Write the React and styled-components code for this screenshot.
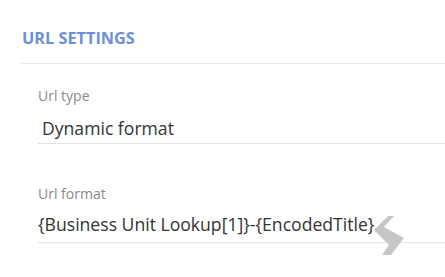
import React from "react";
import styled, { createGlobalStyle } from "styled-components";

const GlobalStyle = createGlobalStyle`
  html, body {
    height: 100%;
  }
  body {
    margin: 0;
    background: #fff;
    font-family: "Open Sans", "Noto Sans", sans-serif;
  }
  #root {
    min-height: 100%;
  }
`;

const Section = styled.section`
  padding: 27px 0 0 21px;
  width: 445px;
  box-sizing: border-box;
`;

const Heading = styled.h2`
  margin: 0;
  padding: 0 0 14px 1px;
  font-size: 16.3px;
  line-height: 22px;
  font-weight: 700;
  color: #6b8fda;
  border-bottom: 1px solid #e8e8e8;
`;

const Fields = styled.div`
  display: flex;
  flex-direction: column;
  gap: 40px;
  padding: 22px 0 0 17px;
`;

const Field = styled.div`
  display: flex;
  flex-direction: column;
  gap: ${({ $gap }) => $gap}px;
`;

const Label = styled.label`
  font-size: 14px;
  line-height: 20px;
  color: #8a8a8a;
`;

const Value = styled.div`
  font-size: 17.6px;
  line-height: 24px;
  color: #333;
  padding: 0 0 ${({ $bottom }) => $bottom}px ${({ $indent }) => $indent}px;
  border-bottom: 1px solid #e3e3e3;
  white-space: nowrap;
`;

const Text = styled.span`
  position: relative;
`;

const Handle = styled.svg`
  position: absolute;
  left: calc(100% - 5px);
  top: 0;
  z-index: 1;
`;

function DragHandle() {
  return (
    <Handle width="40" height="46" viewBox="0 0 40 46">
      <polygon
        points="19,4 25,4 15,15 35,26 22,43 13,43 20,33 5,18"
        fill="#c6c6c6"
      />
    </Handle>
  );
}

export default function App() {
  return (
    <>
      <GlobalStyle />
      <Section>
        <Heading>URL SETTINGS</Heading>
        <Fields>
          <Field $gap={10}>
            <Label>Url type</Label>
            <Value $indent={4} $bottom={3}>Dynamic format</Value>
          </Field>
          <Field $gap={8}>
            <Label>Url format</Label>
            <Value $indent={0} $bottom={6}>
              <Text>
                {"{Business Unit Lookup[1]}-{EncodedTitle}"}
                <DragHandle />
              </Text>
            </Value>
          </Field>
        </Fields>
      </Section>
    </>
  );
}
